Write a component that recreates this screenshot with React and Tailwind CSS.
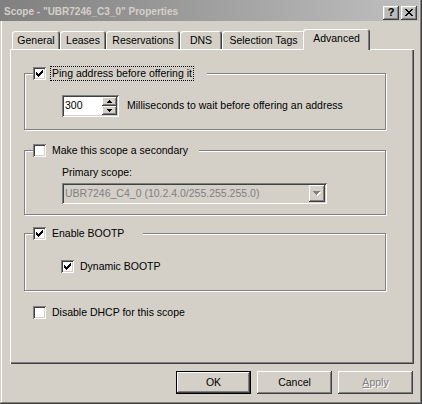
const raised = 'shadow-[inset_-1px_-1px_#404040,inset_1px_1px_#fff,inset_-2px_-2px_#808080,inset_2px_2px_#d4d0c8]'
const sunken = 'shadow-[inset_1px_1px_#808080,inset_-1px_-1px_#fff,inset_2px_2px_#404040,inset_-2px_-2px_#d4d0c8]'
const etched = 'border border-[#808080] shadow-[inset_1px_1px_#fff,1px_1px_#fff]'

const TABS = [
  { label: 'General', w: 'w-[48px]' },
  { label: 'Leases', w: 'w-[46px]' },
  { label: 'Reservations', w: 'w-[74px]' },
  { label: 'DNS', w: 'w-[42px]' },
  { label: 'Selection Tags', w: 'w-[83px]' },
]

function Tick() {
  return (
    <svg width="7" height="7" shapeRendering="crispEdges">
      {[2, 3, 4, 3, 2, 1, 0].map((y, x) => (
        <rect key={x} x={x} y={y} width="1" height="3" fill="#000" />
      ))}
    </svg>
  )
}

function Checkbox({ checked }) {
  return (
    <div className={`w-[13px] h-[13px] shrink-0 bg-white flex items-center justify-center ${sunken}`}>
      {checked && <Tick />}
    </div>
  )
}

function Arrow({ down, color = '#000' }) {
  const rows = down ? [[0, 5], [1, 3], [2, 1]] : [[2, 5], [1, 3], [0, 1]]
  return (
    <svg width="5" height="3" shapeRendering="crispEdges">
      {rows.map(([y, w]) => (
        <rect key={y} x={(5 - w) / 2} y={y} width={w} height="1" fill={color} />
      ))}
    </svg>
  )
}

function ComboArrow() {
  const rows = [[0, 7], [1, 5], [2, 3], [3, 1]]
  return (
    <svg width="8" height="5" shapeRendering="crispEdges">
      {rows.map(([y, w]) => (
        <rect key={'w' + y} x={(7 - w) / 2 + 1} y={y + 1} width={w} height="1" fill="#fff" />
      ))}
      {rows.map(([y, w]) => (
        <rect key={'g' + y} x={(7 - w) / 2} y={y} width={w} height="1" fill="#808080" />
      ))}
    </svg>
  )
}

function Label({ children, focus }) {
  return (
    <span className={`px-[1px] leading-[13px] whitespace-nowrap border ${focus ? 'border-dotted border-black' : 'border-transparent'}`}>
      {children}
    </span>
  )
}

function Legend({ checked, focus, width, children }) {
  return (
    <div className={`absolute left-[8px] top-[-8px] h-[15px] bg-[#d4d0c8] flex items-center gap-[4px] ${width}`}>
      <Checkbox checked={checked} />
      <Label focus={focus}>{children}</Label>
    </div>
  )
}

function Button({ children, isDefault, disabled }) {
  return (
    <div
      className={`w-[75px] h-[23px] flex items-center justify-center ${
        isDefault ? 'border border-black' : ''
      } ${raised}`}
    >
      <span className={disabled ? 'text-[#808080] [text-shadow:1px_1px_0_#fff]' : ''}>{children}</span>
    </div>
  )
}

export default function App() {
  return (
    <div className="w-[422px] h-[404px] bg-[#d4d0c8] text-black text-[10.5px] font-['Liberation_Sans',Arial,sans-serif] shadow-[inset_-1px_-1px_#404040,inset_1px_0_#d4d0c8,inset_-2px_-2px_#808080,inset_2px_0_#fff] overflow-hidden">
      {/* Title bar */}
      <div className="w-[419px] h-[21px] bg-linear-to-r from-[#808080] to-[#c0c0c0] flex items-center justify-between pl-[4px] pr-[2px]">
        <span className="font-bold text-[#d4d0c8] text-[10px] mt-[2px] whitespace-nowrap">
          Scope - &quot;UBR7246_C3_0&quot; Properties
        </span>
        <div className="flex gap-[2px] mt-[4px]">
          <div className={`w-[16px] h-[14px] flex items-center justify-center font-bold text-[11px] leading-none ${raised}`}>
            ?
          </div>
          <div className={`w-[16px] h-[14px] flex items-center justify-center ${raised}`}>
            <svg width="8" height="7" shapeRendering="crispEdges">
              {[0, 1, 2, 3, 4, 5, 6].map((i) => (
                <g key={i}>
                  <rect x={i} y={i} width="2" height="1" fill="#000" />
                  <rect x={6 - i} y={i} width="2" height="1" fill="#000" />
                </g>
              ))}
            </svg>
          </div>
        </div>
      </div>

      {/* Tabs */}
      <div className="mt-[8px] h-[20px] pl-[12px] flex items-end">
        {TABS.map((t) => (
          <div
            key={t.label}
            className={`${t.w} h-[18px] pt-[1px] flex items-center justify-center rounded-t-[3px] shadow-[inset_1px_1px_#fff,inset_-1px_0_#404040,inset_-2px_0_#808080] whitespace-nowrap`}
          >
            {t.label}
          </div>
        ))}
        <div className="relative z-10 -ml-[2px] w-[67px] h-[21px] -mb-[1px] pb-[2px] bg-[#d4d0c8] flex items-center justify-center rounded-t-[3px] shadow-[inset_1px_1px_#fff,inset_-1px_0_#404040,inset_-2px_0_#808080]">
          Advanced
        </div>
      </div>

      {/* Panel */}
      <div className="ml-[10px] w-[404px] h-[315px] pl-[14px] pt-[24px] shadow-[inset_1px_1px_#fff,inset_-1px_-1px_#404040,inset_-2px_-2px_#808080]">
        {/* Ping */}
        <div className={`relative w-[362px] h-[57px] ${etched}`}>
          <Legend checked focus width="w-[174px]">Ping address before offering it</Legend>
          <div className="pt-[21px] pl-[37px] flex items-center gap-[8px]">
            <div className={`w-[57px] h-[22px] bg-white flex p-[2px] ${sunken}`}>
              <div className="flex-1 flex items-center pl-[1px]">300</div>
              <div className="w-[15px] flex flex-col">
                <div className={`h-[9px] bg-[#d4d0c8] flex items-center justify-center ${raised}`}>
                  <Arrow />
                </div>
                <div className={`h-[9px] bg-[#d4d0c8] flex items-center justify-center ${raised}`}>
                  <Arrow down />
                </div>
              </div>
            </div>
            <span className="whitespace-nowrap">Milliseconds to wait before offering an address</span>
          </div>
        </div>

        {/* Secondary */}
        <div className={`relative mt-[20px] w-[362px] h-[65px] ${etched}`}>
          <Legend width="w-[166px]">Make this scope a secondary</Legend>
          <div className="pt-[15px] pl-[37px]">
            <div className="leading-[13px]">Primary scope:</div>
            <div className={`mt-[4px] w-[265px] h-[21px] flex items-center p-[2px] ${sunken}`}>
              <span className="flex-1 pl-[1px] text-[#808080] whitespace-nowrap">
                UBR7246_C4_0 (10.2.4.0/255.255.255.0)
              </span>
              <div className={`w-[16px] h-[17px] flex items-center justify-center ${raised}`}>
                <ComboArrow />
              </div>
            </div>
          </div>
        </div>

        {/* BOOTP */}
        <div className={`relative mt-[18px] w-[362px] h-[58px] ${etched}`}>
          <Legend checked width="w-[110px]">Enable BOOTP</Legend>
          <div className="pt-[25px] pl-[36px] flex items-center gap-[4px]">
            <Checkbox checked />
            <Label>Dynamic BOOTP</Label>
          </div>
        </div>

        <div className="mt-[14px] ml-[9px] flex items-center gap-[4px]">
          <Checkbox />
          <Label>Disable DHCP for this scope</Label>
        </div>
      </div>

      {/* Buttons */}
      <div className="mt-[7px] pr-[9px] flex justify-end gap-[6px]">
        <Button isDefault>OK</Button>
        <Button>Cancel</Button>
        <Button disabled>
          <u>A</u>pply
        </Button>
      </div>
    </div>
  )
}
